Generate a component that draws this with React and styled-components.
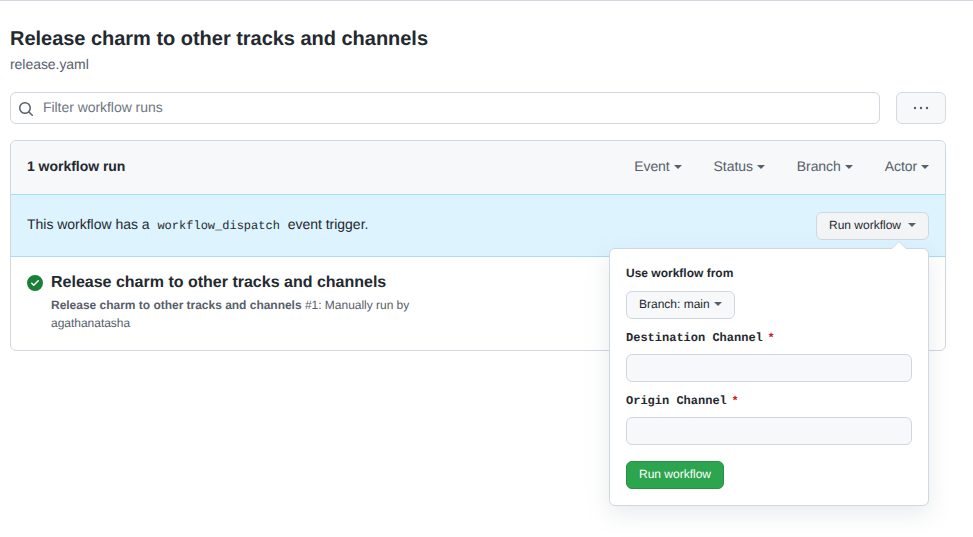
import React from 'react'
import styled, { createGlobalStyle } from 'styled-components'

const GlobalStyle = createGlobalStyle`
    html, body {
        margin: 0;
        padding: 0;
        background: #fff;
    }

    body {
        font-family: "Liberation Sans", Arial, sans-serif;
        font-size: 14px;
        line-height: 1.5;
        color: #24292f;
        text-rendering: geometricPrecision;
    }

    input, button {
        text-rendering: geometricPrecision;
    }

    * {
        box-sizing: border-box;
    }
`

function SearchIcon() {
    return (
        <SearchSvg viewBox="0 0 16 16" fill="currentColor">
            <path d="M10.68 11.74a6 6 0 0 1-7.922-8.982 6 6 0 0 1 8.982 7.922l3.04 3.04a.749.749 0 0 1-.326 1.275.749.749 0 0 1-.734-.215ZM11.5 7a4.499 4.499 0 1 0-8.997 0A4.499 4.499 0 0 0 11.5 7Z" />
        </SearchSvg>
    )
}

function KebabIcon() {
    return (
        <svg width="16" height="16" viewBox="0 0 16 16" fill="#57606a">
            <path d="M8 9.2a1.2 1.2 0 1 0 0-2.4 1.2 1.2 0 0 0 0 2.4ZM2 9.2a1.2 1.2 0 1 0 0-2.4 1.2 1.2 0 0 0 0 2.4Zm12 0a1.2 1.2 0 1 0 0-2.4 1.2 1.2 0 0 0 0 2.4Z" />
        </svg>
    )
}

function SuccessIcon() {
    return (
        <StatusSvg viewBox="0 0 16 16" fill="#1a7f37">
            <path d="M8 16A8 8 0 1 1 8 0a8 8 0 0 1 0 16Zm3.78-9.72a.751.751 0 0 0-.018-1.042.751.751 0 0 0-1.042-.018L6.75 9.19 5.28 7.72a.751.751 0 0 0-1.042.018.751.751 0 0 0-.018 1.042l2 2a.75.75 0 0 0 1.06 0Z" />
        </StatusSvg>
    )
}

function App() {
    return (
        <Page>
            <GlobalStyle />
            <Title>Release charm to other tracks and channels</Title>
            <FileName>release.yaml</FileName>

            <SearchRow>
                <SearchBox>
                    <SearchIcon />
                    <SearchInput placeholder="Filter workflow runs" />
                </SearchBox>
                <MoreButton><KebabIcon /></MoreButton>
            </SearchRow>

            <RunsBox>
                <BoxHeader>
                    <RunCount>1 workflow run</RunCount>
                    <Filters>
                        <Filter>Event<Caret /></Filter>
                        <Filter>Status<Caret /></Filter>
                        <Filter>Branch<Caret /></Filter>
                        <Filter>Actor<Caret /></Filter>
                    </Filters>
                </BoxHeader>

                <Banner>
                    <BannerText>
                        This workflow has a <code>workflow_dispatch</code> event trigger.
                    </BannerText>
                    <Dropdown>
                        <SmallButton>Run workflow<Caret $gap={7} $muted /></SmallButton>
                        <Popover>
                            <PopoverHeading>Use workflow from</PopoverHeading>
                            <BranchButton>Branch: main<Caret $muted /></BranchButton>
                            <Field>
                                <FieldLabel>Destination Channel<Required>*</Required></FieldLabel>
                                <FieldInput />
                            </Field>
                            <Field>
                                <FieldLabel>Origin Channel<Required>*</Required></FieldLabel>
                                <FieldInput />
                            </Field>
                            <SubmitButton>Run workflow</SubmitButton>
                        </Popover>
                    </Dropdown>
                </Banner>

                <RunRow>
                    <SuccessIcon />
                    <RunInfo>
                        <RunTitle>Release charm to other tracks and channels</RunTitle>
                        <RunMeta>
                            <b>Release charm to other tracks and channels</b> #1: Manually run by agathanatasha
                        </RunMeta>
                    </RunInfo>
                </RunRow>
            </RunsBox>
        </Page>
    )
}

export default App

const Page = styled.div`
    min-height: 537px;
    border-top: 1px solid #d0d7de;
    padding: 24px 27px 0 10px;
`

const Title = styled.h1`
    margin: 0;
    font-size: 20px;
    font-weight: 700;
    line-height: 28px;
    letter-spacing: -0.025px;
`

const FileName = styled.div`
    margin-top: 1px;
    font-size: 14px;
    line-height: 21px;
    color: #57606a;
    letter-spacing: -0.05px;
`

const SearchRow = styled.div`
    display: flex;
    gap: 16px;
    margin-top: 17px;
`

const SearchBox = styled.div`
    flex: 1;
    height: 32px;
    display: flex;
    align-items: center;
    padding-left: 7px;
    background: #fff;
    border: 1px solid #d0d7de;
    border-radius: 6px;
    color: #57606a;
`

const SearchSvg = styled.svg`
    width: 16px;
    height: 16px;
    margin-top: 2px;
    flex-shrink: 0;
`

const SearchInput = styled.input`
    flex: 1;
    margin: -3px 0 0 9px;
    padding: 0;
    border: 0;
    outline: 0;
    background: transparent;
    font: 14px/20px "Liberation Sans", Arial, sans-serif;
    letter-spacing: -0.05px;
    color: #24292f;

    &::placeholder {
        color: #6e7781;
        opacity: 1;
    }
`

const MoreButton = styled.button`
    width: 50px;
    height: 32px;
    padding: 0;
    display: flex;
    align-items: center;
    justify-content: center;
    background: #f6f8fa;
    border: 1px solid #d5dae0;
    border-radius: 6px;
`

const RunsBox = styled.div`
    margin-top: 16px;
    border: 1px solid #d0d7de;
    border-radius: 6px;
`

const BoxHeader = styled.div`
    height: 53px;
    display: flex;
    align-items: center;
    justify-content: space-between;
    padding: 0 16px 2px;
    background: #f6f8fa;
    border-radius: 6px 6px 0 0;
`

const RunCount = styled.div`
    font-size: 14px;
    font-weight: 700;
    letter-spacing: -0.03px;
`

const Filters = styled.div`
    display: flex;
    gap: 32px;
`

const Filter = styled.div`
    display: flex;
    align-items: center;
    font-size: 14px;
    letter-spacing: -0.08px;
    color: #57606a;
`

const Caret = styled.span`
    display: inline-block;
    width: 0;
    height: 0;
    margin-left: ${props => props.$gap || 4}px;
    margin-top: 1px;
    border-top: 4px solid ${props => props.$muted ? '#57606a' : 'currentColor'};
    border-left: 4px solid transparent;
    border-right: 4px solid transparent;
`

const Banner = styled.div`
    height: 63px;
    display: flex;
    align-items: center;
    justify-content: space-between;
    padding: 0 16px;
    background: #ddf4ff;
    border-top: 1px solid #a7dcfb;
    border-bottom: 1px solid #a7dcfb;
`

const BannerText = styled.div`
    margin-top: -2px;
    font-size: 14px;
    letter-spacing: -0.02px;

    code {
        margin: 0 4px;
        font-family: "Liberation Mono", monospace;
        font-size: 12px;
        letter-spacing: 0;
    }
`

const Dropdown = styled.div`
    position: relative;
`

const SmallButton = styled.button`
    height: 28px;
    display: flex;
    align-items: center;
    padding: 0 12px 2px;
    font: 12px/20px "Liberation Sans", Arial, sans-serif;
    color: #24292f;
    background: #f3f4f6;
    border: 1px solid #d0d7de;
    border-radius: 6px;
`

const Popover = styled.div`
    position: absolute;
    top: 36px;
    right: 0;
    z-index: 10;
    width: 320px;
    height: 258px;
    padding: 16px;
    background: #fff;
    border: 1px solid #d0d7de;
    border-radius: 6px;
    box-shadow: 0 8px 24px rgba(140, 149, 159, 0.2);

    &::before,
    &::after {
        content: "";
        position: absolute;
        right: 21px;
        border-left: 8px solid transparent;
        border-right: 8px solid transparent;
    }

    &::before {
        top: -8px;
        border-bottom: 8px solid #d0d7de;
    }

    &::after {
        top: -7px;
        border-bottom: 8px solid #fff;
    }
`

const PopoverHeading = styled.div`
    font-size: 12px;
    font-weight: 700;
    line-height: 16px;
`

const BranchButton = styled(SmallButton)`
    margin-top: 10px;
    background: #f6f8fa;
`

const Field = styled.div`
    margin-top: 10px;
`

const FieldLabel = styled.div`
    font-family: "Liberation Mono", monospace;
    font-size: 12px;
    font-weight: 700;
    line-height: 16px;
`

const Required = styled.span`
    margin-left: 6px;
    font-family: "Liberation Sans", Arial, sans-serif;
    color: #cf222e;
`

const FieldInput = styled.input`
    display: block;
    width: 100%;
    height: 28px;
    margin-top: 8px;
    background: #f6f8fa;
    border: 1px solid #d0d7de;
    border-radius: 6px;
    outline: 0;
`

const SubmitButton = styled.button`
    display: block;
    height: 28px;
    margin-top: 16px;
    padding: 0 12px 2px;
    font: 12px/20px "Liberation Sans", Arial, sans-serif;
    color: #fff;
    background: #2da44e;
    border: 1px solid #298e46;
    border-radius: 6px;
`

const RunRow = styled.div`
    height: 93px;
    display: flex;
    padding: 15px 16px 0;
`

const StatusSvg = styled.svg`
    width: 16px;
    height: 16px;
    margin-top: 3px;
    flex-shrink: 0;
`

const RunInfo = styled.div`
    margin-left: 8px;
    width: 400px;
`

const RunTitle = styled.div`
    font-size: 16px;
    font-weight: 700;
    line-height: 21px;
`

const RunMeta = styled.div`
    margin-top: 3px;
    font-size: 12px;
    line-height: 18px;
    letter-spacing: -0.02px;
    color: #57606a;
`
